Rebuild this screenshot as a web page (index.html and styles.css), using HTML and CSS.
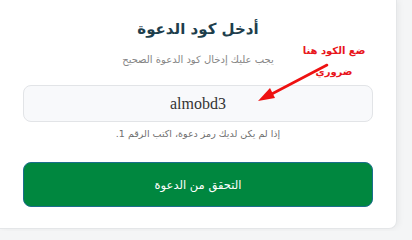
FILE: index.html
```html
<!DOCTYPE html>
<html lang="ar" dir="rtl">
<head>
<meta charset="utf-8">
<link rel="stylesheet" href="styles.css">
</head>
<body>
<div class="page">
  <div class="card">
    <h1 class="title">أدخل كود الدعوة</h1>
    <p class="subtitle">يجب عليك إدخال كود الدعوة الصحيح</p>
    <div class="field">almobd3</div>
    <p class="hint">إذا لم يكن لديك رمز دعوة، اكتب الرقم 1.</p>
    <button class="btn">التحقق من الدعوة</button>

    <div class="note"><span>ضع الكود هنا</span><span>ضروري</span></div>
    <svg class="arrow" width="80" height="50" viewBox="0 0 80 50">
      <line x1="73" y1="5" x2="12" y2="37" stroke="#ee1111" stroke-width="2.6" stroke-linecap="round"/>
      <polygon points="4,41 16,28 21,38" fill="#ee1111"/>
    </svg>
  </div>
</div>
</body>
</html>
```
FILE: styles.css
```css
html, body {
  margin: 0;
  padding: 0;
}
body {
  width: 412px;
  height: 231px;
  overflow: hidden;
  background: #f4f5f6;
  font-family: "DejaVu Sans", "Noto Sans", sans-serif;
}
.page {
  display: flex;
  justify-content: flex-start;
  direction: ltr;
  height: 231px;
}
.card {
  position: relative;
  direction: rtl;
  box-sizing: border-box;
  width: 397px;
  height: 229px;
  background: #ffffff;
  border-right: 1px solid #e4e6e8;
  border-bottom: 1px solid #e4e6e8;
  border-bottom-right-radius: 8px;
  box-shadow: 2px 0 6px rgba(0,0,0,0.05);
  padding: 19px 23px 0 23px;
  display: flex;
  flex-direction: column;
  align-items: stretch;
}
.title {
  margin: 0;
  text-align: center;
  font-size: 15px;
  line-height: 20px;
  font-weight: bold;
  color: #1e3e4c;
}
.subtitle {
  margin: 14px 0 0;
  text-align: center;
  font-size: 10px;
  line-height: 14px;
  color: #858585;
}
.field {
  margin-top: 18px;
  height: 37px;
  box-sizing: border-box;
  border: 1px solid #e2e4e7;
  border-radius: 8px;
  background: #f8f9fb;
  display: flex;
  align-items: center;
  justify-content: center;
  font-family: "Liberation Serif", "Times New Roman", serif;
  font-size: 16px;
  color: #333333;
}
.hint {
  margin: 5px 0 0;
  text-align: center;
  font-size: 9.5px;
  line-height: 14px;
  color: #6f6f6f;
}
.btn {
  margin-top: 21px;
  height: 45px;
  box-sizing: border-box;
  border: 1px solid #1a6e8c;
  border-radius: 8px;
  background: #00873f;
  color: #ffffff;
  font-family: "DejaVu Sans", sans-serif;
  font-size: 11.5px;
  padding: 0;
}
.note {
  position: absolute;
  left: 296px;
  top: 40px;
  width: 76px;
  display: flex;
  flex-direction: column;
  align-items: center;
  white-space: nowrap;
  font-size: 10px;
  line-height: 21px;
  color: #e8151b;
  font-weight: bold;
}
.arrow {
  position: absolute;
  left: 254px;
  top: 60px;
}
```
